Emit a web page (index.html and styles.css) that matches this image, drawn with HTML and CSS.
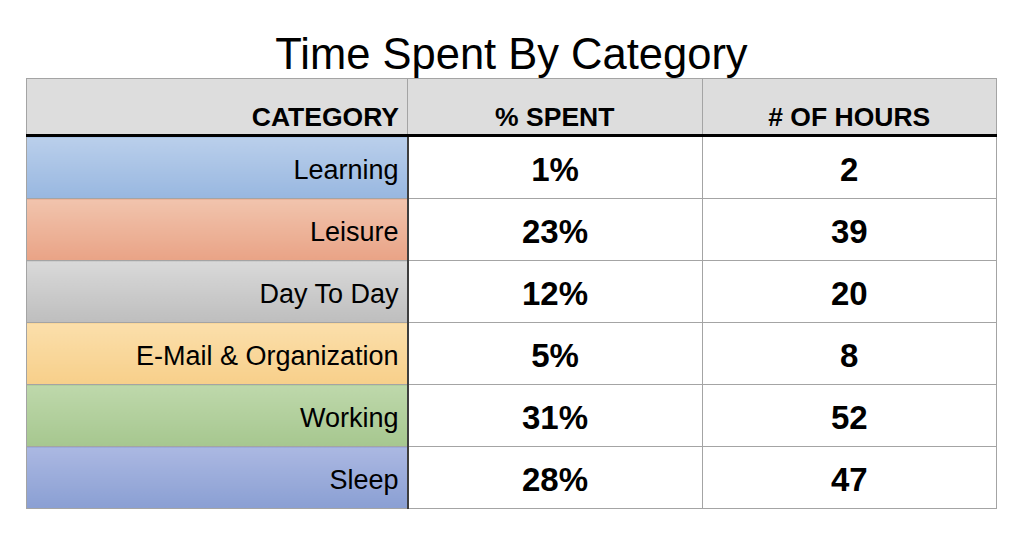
FILE: index.html
```html
<!DOCTYPE html>
<html>
<head>
<meta charset="utf-8">
<link rel="stylesheet" href="styles.css">
</head>
<body>
<div class="page">
  <h1 class="title">Time Spent By Category</h1>
  <table class="data">
    <thead>
      <tr>
        <th class="c-cat">CATEGORY</th>
        <th class="c-num">% SPENT</th>
        <th class="c-num"># OF HOURS</th>
      </tr>
    </thead>
    <tbody>
      <tr><td class="cat learning">Learning</td><td class="val">1%</td><td class="val">2</td></tr>
      <tr><td class="cat leisure">Leisure</td><td class="val">23%</td><td class="val">39</td></tr>
      <tr><td class="cat daytoday">Day To Day</td><td class="val">12%</td><td class="val">20</td></tr>
      <tr><td class="cat email">E-Mail &amp; Organization</td><td class="val">5%</td><td class="val">8</td></tr>
      <tr><td class="cat working">Working</td><td class="val">31%</td><td class="val">52</td></tr>
      <tr><td class="cat sleep">Sleep</td><td class="val">28%</td><td class="val">47</td></tr>
    </tbody>
  </table>
</div>
</body>
</html>
```
FILE: styles.css
```css
html, body {
  margin: 0;
  padding: 0;
  background: #ffffff;
}
body {
  font-family: "Liberation Sans", Arial, sans-serif;
  color: #000;
}
.page {
  padding: 30px 0 0 26px;
  width: 971px;
}
.title {
  margin: 0;
  font-weight: normal;
  font-size: 43.5px;
  line-height: 48px;
  text-align: center;
  height: 48px;
}
.data {
  border-collapse: collapse;
  table-layout: fixed;
  width: 971px;
}
.data th, .data td {
  padding: 0;
  border: 1px solid #a4a4a4;
}
.data th {
  background: #dddddd;
  height: 53px;
  font-size: 26.5px;
  font-weight: bold;
  vertical-align: bottom;
  padding-bottom: 2px;
  border-bottom: 3px solid #000;
  line-height: 30px;
}
.data th.c-cat {
  width: 372px;
  text-align: right;
  padding-right: 8px;
}
.data th.c-num {
  text-align: center;
}
.data td {
  height: 56px;
  padding-top: 5px;
}
.cat {
  text-align: right;
  padding-right: 8px !important;
  font-size: 27px;
  border-right: 2px solid #3e3e3e !important;
}
.val {
  text-align: center;
  font-size: 33px;
  font-weight: bold;
}
.learning { background: linear-gradient(#bacfeb, #98b7e0); }
.leisure { background: linear-gradient(#f1c4ad, #e9a386); }
.daytoday { background: linear-gradient(#d9d9d9, #bebebe); }
.email { background: linear-gradient(#fbdfab, #f7cf8a); }
.working { background: linear-gradient(#bed8ab, #a6c78f); }
.sleep { background: linear-gradient(#abb8e2, #8a9fd3); }
```
